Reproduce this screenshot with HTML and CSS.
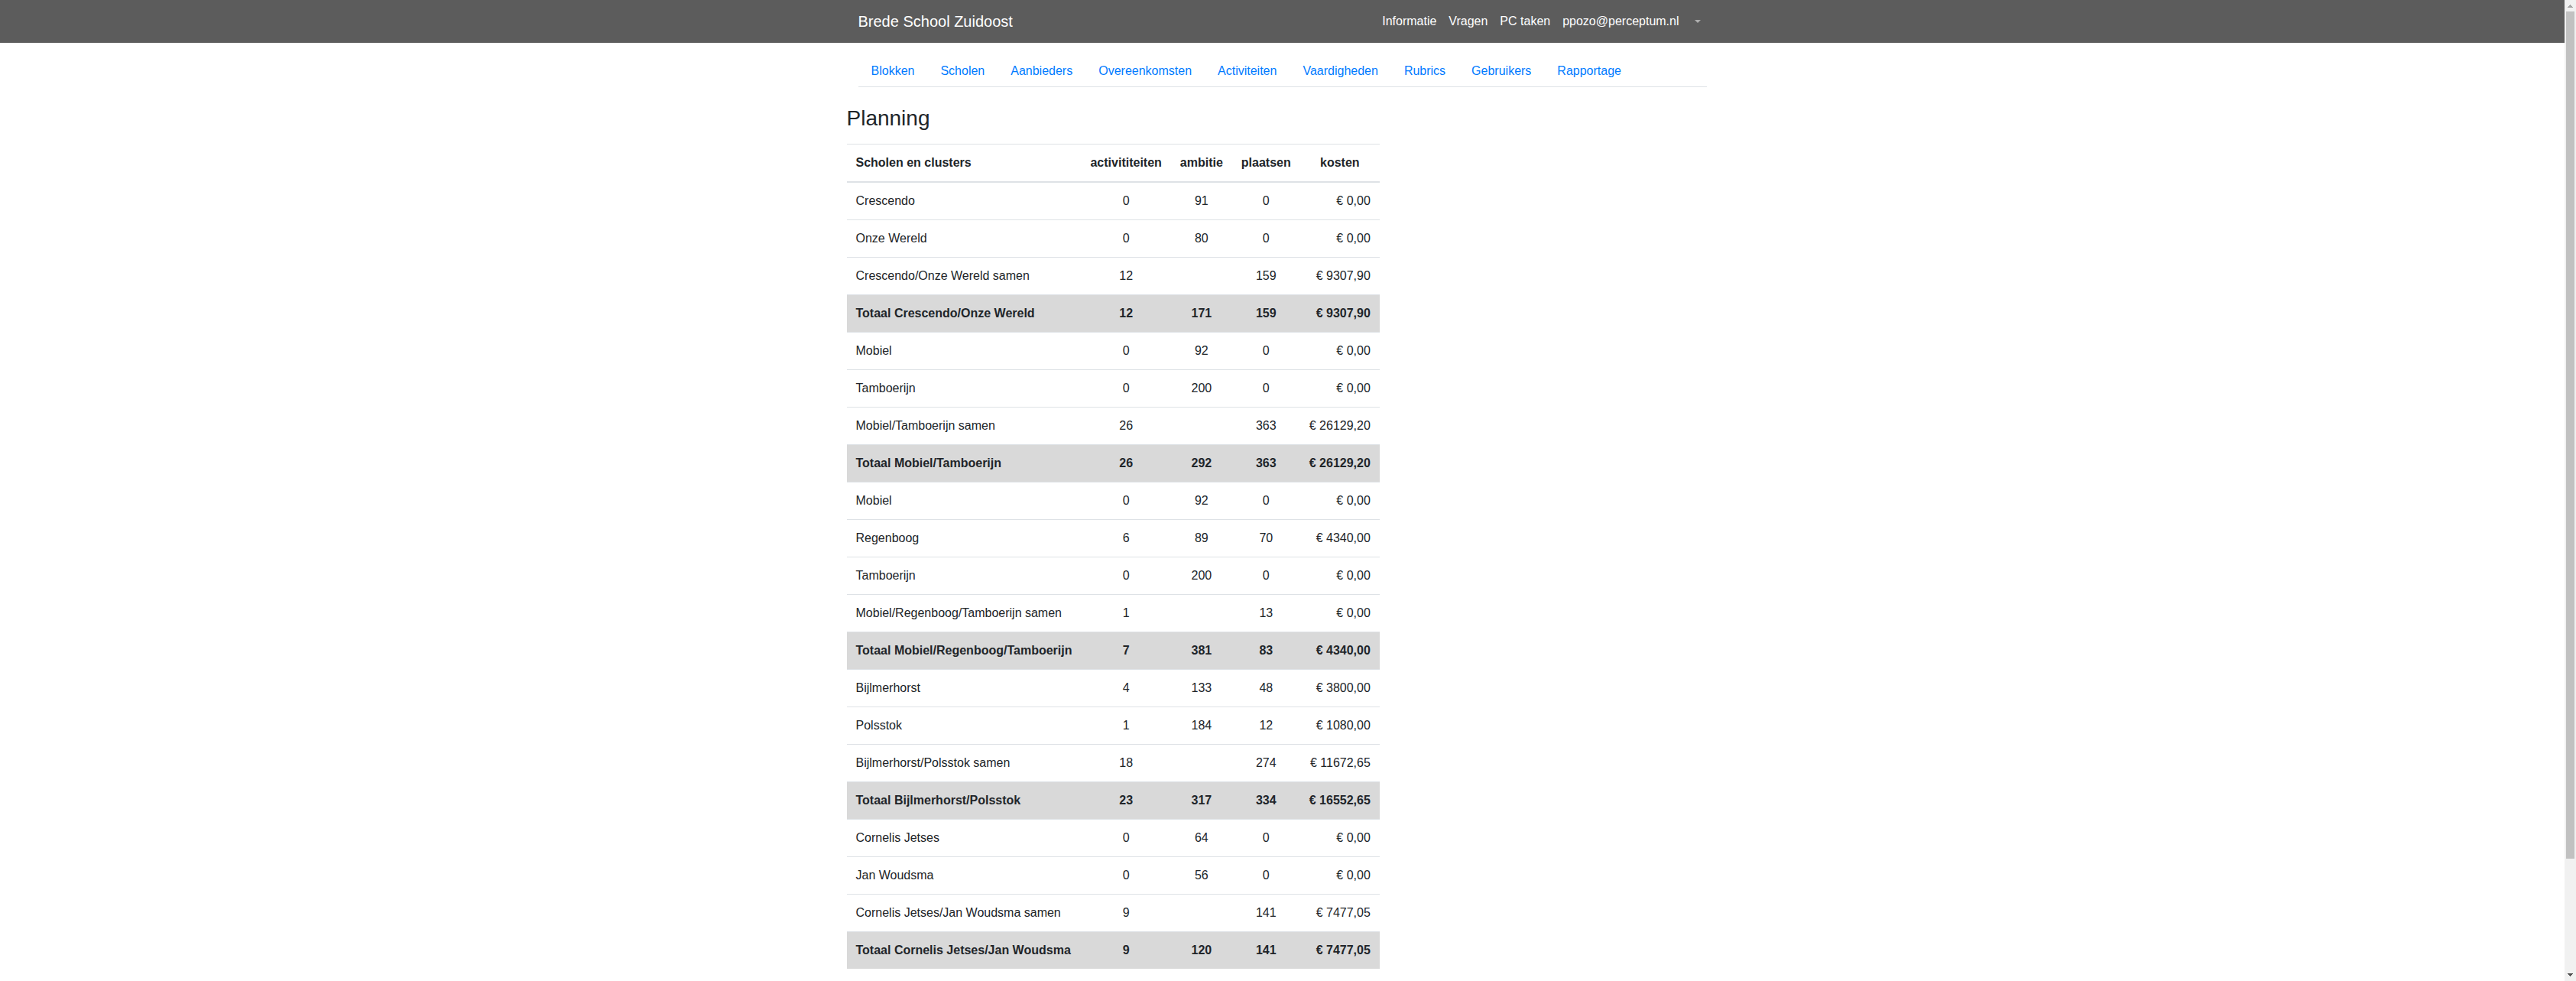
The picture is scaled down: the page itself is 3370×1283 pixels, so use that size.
FILE: index.html
```html
<!DOCTYPE html>
<html lang="nl">
<head>
<meta charset="utf-8">
<meta name="viewport" content="width=device-width, initial-scale=1">
<title>Brede School Zuidoost</title>
<link rel="stylesheet" href="styles.css">
</head>
<body>
<div class="page">
  <header class="navbar">
    <div class="container navbar-inner">
      <a class="brand" href="#">Brede School Zuidoost</a>
      <nav class="navbar-links" aria-label="Account">
        <a class="navbar-link" href="#">Informatie</a>
        <a class="navbar-link" href="#">Vragen</a>
        <a class="navbar-link" href="#">PC taken</a>
        <a class="navbar-link" href="#">ppozo@perceptum.nl</a>
        <button class="dropdown-toggle" type="button" aria-label="Menu"><span class="caret"></span></button>
      </nav>
    </div>
  </header>
  <div class="container">
    <nav class="tabs" aria-label="Beheer">
      <a class="tab" href="#">Blokken</a>
      <a class="tab" href="#">Scholen</a>
      <a class="tab" href="#">Aanbieders</a>
      <a class="tab" href="#">Overeenkomsten</a>
      <a class="tab" href="#">Activiteiten</a>
      <a class="tab" href="#">Vaardigheden</a>
      <a class="tab" href="#">Rubrics</a>
      <a class="tab" href="#">Gebruikers</a>
      <a class="tab" href="#">Rapportage</a>
    </nav>
  </div>
  <main class="content">
    <h1 class="title">Planning</h1>
    <table class="table">
      <thead>
        <tr><th class="name">Scholen en clusters</th><th>activititeiten</th><th>ambitie</th><th>plaatsen</th><th>kosten</th></tr>
      </thead>
      <tbody>
        <tr><td class="name">Crescendo</td><td>0</td><td>91</td><td>0</td><td class="cost">€ 0,00</td></tr>
        <tr><td class="name">Onze Wereld</td><td>0</td><td>80</td><td>0</td><td class="cost">€ 0,00</td></tr>
        <tr><td class="name">Crescendo/Onze Wereld samen</td><td>12</td><td></td><td>159</td><td class="cost">€ 9307,90</td></tr>
        <tr class="total"><td class="name">Totaal Crescendo/Onze Wereld</td><td>12</td><td>171</td><td>159</td><td class="cost">€ 9307,90</td></tr>
        <tr><td class="name">Mobiel</td><td>0</td><td>92</td><td>0</td><td class="cost">€ 0,00</td></tr>
        <tr><td class="name">Tamboerijn</td><td>0</td><td>200</td><td>0</td><td class="cost">€ 0,00</td></tr>
        <tr><td class="name">Mobiel/Tamboerijn samen</td><td>26</td><td></td><td>363</td><td class="cost">€ 26129,20</td></tr>
        <tr class="total"><td class="name">Totaal Mobiel/Tamboerijn</td><td>26</td><td>292</td><td>363</td><td class="cost">€ 26129,20</td></tr>
        <tr><td class="name">Mobiel</td><td>0</td><td>92</td><td>0</td><td class="cost">€ 0,00</td></tr>
        <tr><td class="name">Regenboog</td><td>6</td><td>89</td><td>70</td><td class="cost">€ 4340,00</td></tr>
        <tr><td class="name">Tamboerijn</td><td>0</td><td>200</td><td>0</td><td class="cost">€ 0,00</td></tr>
        <tr><td class="name">Mobiel/Regenboog/Tamboerijn samen</td><td>1</td><td></td><td>13</td><td class="cost">€ 0,00</td></tr>
        <tr class="total"><td class="name">Totaal Mobiel/Regenboog/Tamboerijn</td><td>7</td><td>381</td><td>83</td><td class="cost">€ 4340,00</td></tr>
        <tr><td class="name">Bijlmerhorst</td><td>4</td><td>133</td><td>48</td><td class="cost">€ 3800,00</td></tr>
        <tr><td class="name">Polsstok</td><td>1</td><td>184</td><td>12</td><td class="cost">€ 1080,00</td></tr>
        <tr><td class="name">Bijlmerhorst/Polsstok samen</td><td>18</td><td></td><td>274</td><td class="cost">€ 11672,65</td></tr>
        <tr class="total"><td class="name">Totaal Bijlmerhorst/Polsstok</td><td>23</td><td>317</td><td>334</td><td class="cost">€ 16552,65</td></tr>
        <tr><td class="name">Cornelis Jetses</td><td>0</td><td>64</td><td>0</td><td class="cost">€ 0,00</td></tr>
        <tr><td class="name">Jan Woudsma</td><td>0</td><td>56</td><td>0</td><td class="cost">€ 0,00</td></tr>
        <tr><td class="name">Cornelis Jetses/Jan Woudsma samen</td><td>9</td><td></td><td>141</td><td class="cost">€ 7477,05</td></tr>
        <tr class="total"><td class="name">Totaal Cornelis Jetses/Jan Woudsma</td><td>9</td><td>120</td><td>141</td><td class="cost">€ 7477,05</td></tr>
      </tbody>
    </table>
  </main>
</div>
<div class="scrollbar" aria-hidden="true">
  <svg class="arrow" viewBox="0 0 15 15" shape-rendering="crispEdges"><path fill="#a3a3a3" d="M7 6h1v1h1v1h1v1h1v1H4V9h1V8h1V7h1z"/></svg>
  <div class="track"><div class="thumb"></div></div>
  <svg class="arrow" viewBox="0 0 15 15" shape-rendering="crispEdges"><path fill="#505050" d="M4 5h7v1h-1v1H9v1H8v1H7V8H6V7H5V6H4z"/></svg>
</div>
</body>
</html>
```
FILE: styles.css
```css
*, *::before, *::after {
  box-sizing: border-box;
}

body {
  display: flex;
  min-height: 100vh;
  margin: 0;
  background: #fff;
  color: #212529;
  font-family: "Liberation Sans", Arial, sans-serif;
  font-size: 16px;
  line-height: 24px;
}

a {
  color: #007bff;
  text-decoration: none;
}

.page {
  flex: 1;
  min-width: 0;
}

.container,
.content {
  width: 100%;
  max-width: 1140px;
  margin: 0 auto;
}

.container {
  padding: 0 15px;
}

/* Top bar */
.navbar {
  padding: 8px 0;
  background: #5c5c5c;
}

.navbar-inner {
  display: flex;
  align-items: center;
  justify-content: space-between;
}

.brand {
  padding: 5px 0;
  color: #fff;
  font-size: 20px;
  line-height: 30px;
}

.navbar-links {
  display: flex;
  align-items: center;
}

.navbar-link {
  padding: 8px;
  color: #fff;
}

.dropdown-toggle {
  display: flex;
  align-items: center;
  padding: 8px 8px 8px 12px;
  border: 0;
  background: none;
}

.caret {
  border: 4px solid transparent;
  border-top-color: #aeaeae;
  border-bottom: 0;
}

/* Section tabs */
.tabs {
  display: flex;
  margin: 16px 0 24px;
  border-bottom: 1px solid #dee2e6;
}

.tab {
  padding: 9px 17px 8px;
}

/* Planning table */
.title {
  margin: 0 0 16px;
  font-size: 28px;
  font-weight: 400;
  line-height: 34px;
}

.table {
  border-collapse: collapse;
}

.table th,
.table td {
  padding: 12px;
  border-top: 1px solid #dee2e6;
  text-align: center;
}

.table thead th {
  border-bottom: 2px solid #dee2e6;
}

.table .name {
  text-align: left;
}

.table .cost {
  text-align: right;
}

.total {
  background: #d9d9d9;
  font-weight: 700;
}

/* Window scrollbar */
.scrollbar {
  display: flex;
  flex-direction: column;
  width: 15px;
  background: #f1f1f1;
}

.arrow {
  display: block;
  width: 15px;
  height: 15px;
}

.track {
  flex: 1;
  display: flex;
  flex-direction: column;
  padding: 0 2px;
}

.thumb {
  flex-basis: 88.4%;
  background: #c1c1c1;
}
```
